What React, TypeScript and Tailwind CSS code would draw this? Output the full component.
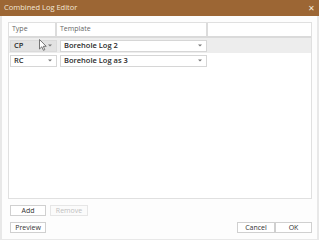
import React from 'react';

const font = { fontFamily: '"Open Sans", "Noto Sans", Arial, sans-serif' };

const Arrow = () => (
    <svg width="4" height="3" viewBox="0 0 4 3" className="shrink-0">
        <path d="M0 0.5 L4 0.5 L2 2.5 Z" fill="#777" />
    </svg>
);

const Combo = ({ text, w, grey }: { text: string; w: string; grey?: boolean }) => (
    <div
        className={`${w} h-[12px] flex items-center justify-between pl-[3px] pr-[4px] border ${
            grey ? 'bg-[#e2e2e2] border-[#dadada]' : 'bg-white border-[#d6d6d6]'
        }`}
    >
        <span className="text-[7.5px] leading-none text-[#2a2a2a] font-semibold">{text}</span>
        <Arrow />
    </div>
);

const Btn = ({ label, w, disabled }: { label: string; w: string; disabled?: boolean }) => (
    <div
        className={`${w} h-[11px] flex items-center justify-center border text-[7px] leading-none ${
            disabled ? 'border-[#e6e6e6] text-[#c0c0c0] bg-[#fbfbfb]' : 'border-[#d0d0d0] text-[#333] bg-white'
        }`}
    >
        {label}
    </div>
);

const App = () => {
    const rows = [
        { type: 'CP', template: 'Borehole Log 2', selected: true },
        { type: 'RC', template: 'Borehole Log as 3', selected: false },
    ];

    return (
        <div className="w-[319px] h-[240px] bg-white flex flex-col relative overflow-hidden" style={font}>
            {/* Title bar */}
            <div className="h-[16px] bg-[#9c6634] flex items-center justify-between pl-[4px] pr-[4px] shrink-0">
                <span className="text-[7.5px] leading-none text-[#f3e6d8]">Combined Log Editor</span>
                <span className="text-[8px] leading-none text-[#f3e6d8]">✕</span>
            </div>

            {/* Body */}
            <div className="flex-1 flex flex-col border-l-2 border-r-2 border-b border-[#e8e8e8] bg-[#fdfdfd] pl-[6px] pr-[5px]">
                {/* Grid */}
                <div className="mt-[6px] w-[304px] h-[177px] border border-[#e0e0e0] bg-white flex flex-col">
                    <div className="h-[15px] flex border-b-2 border-[#dadada] shrink-0">
                        <div className="w-[48px] flex items-center pl-[3px] border-r-2 border-[#dcdcdc] text-[7px] text-[#666]">
                            Type
                        </div>
                        <div className="w-[151px] flex items-center pl-[3px] border-r-2 border-[#dcdcdc] text-[7px] text-[#666]">
                            Template
                        </div>
                        <div className="flex-1" />
                    </div>
                    {rows.map((r, i) => (
                        <div
                            key={i}
                            className={`h-[15px] flex items-center gap-[3px] pl-[1px] ${r.selected ? 'bg-[#ededed]' : 'bg-white'}`}
                        >
                            <Combo text={r.type} w="w-[47px]" grey={r.selected} />
                            <Combo text={r.template} w="w-[147px]" />
                        </div>
                    ))}
                </div>

                {/* Add / Remove */}
                <div className="flex gap-[4px] mt-[6px] pl-[2px]">
                    <Btn label="Add" w="w-[36px]" />
                    <Btn label="Remove" w="w-[38px]" disabled />
                </div>

                {/* Footer buttons */}
                <div className="flex justify-between mt-[6px] pl-[2px]">
                    <Btn label="Preview" w="w-[36px]" />
                    <div className="flex">
                        <Btn label="Cancel" w="w-[38px]" />
                        <Btn label="OK" w="w-[37px]" />
                    </div>
                </div>
            </div>

            {/* Mouse cursor */}
            <svg className="absolute left-[39px] top-[39px]" width="8" height="12" viewBox="0 0 8 12">
                <path d="M0.5 0.5 L0.5 10 L2.8 7.8 L4.4 11.3 L5.8 10.7 L4.3 7.3 L7.2 7.3 Z" fill="white" stroke="#555" strokeWidth="0.8" />
            </svg>
        </div>
    );
};

export default App;
